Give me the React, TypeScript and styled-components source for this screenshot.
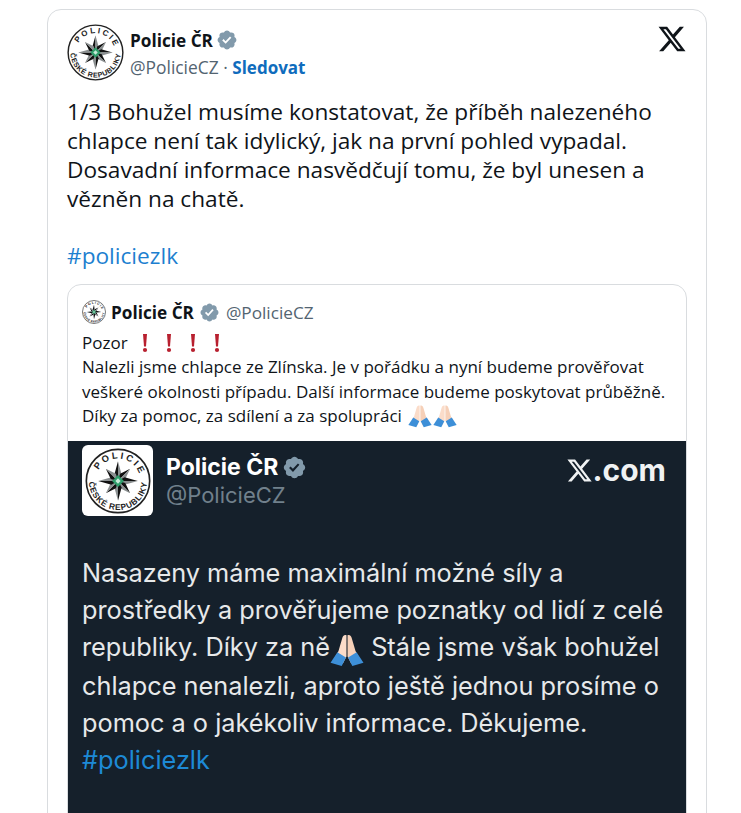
import styled, { createGlobalStyle } from 'styled-components';

const BADGE_PATH =
	'M22.25 12c0-1.43-.88-2.67-2.19-3.34.46-1.39.2-2.9-.81-3.91s-2.52-1.27-3.91-.81c-.66-1.31-1.91-2.19-3.34-2.19s-2.67.88-3.33 2.19c-1.4-.46-2.91-.2-3.92.81s-1.26 2.52-.8 3.91c-1.31.67-2.2 1.91-2.2 3.34s.89 2.67 2.2 3.34c-.46 1.39-.21 2.9.8 3.91s2.52 1.26 3.91.81c.67 1.31 1.91 2.19 3.34 2.19s2.68-.88 3.34-2.19c1.39.45 2.9.2 3.91-.81s1.27-2.52.81-3.91c1.31-.67 2.19-1.91 2.19-3.34zm-11.71 4.2L6.8 12.46l1.41-1.42 2.26 2.26 4.8-5.23 1.47 1.36-6.2 6.77z';
const X_PATH =
	'M18.244 2.25h3.308l-7.227 8.26 8.502 11.24H16.17l-5.214-6.817L4.99 21.75H1.68l7.73-8.835L1.254 2.25H8.08l4.713 6.231zm-1.161 17.52h1.833L7.084 4.126H5.117z';

const RAYS = [0, 45, 90, 135, 180, 225, 270, 315];

const Seal = ({ size, id }: { size: number; id: string }) => (
	<svg width={size} height={size} viewBox="0 0 100 100">
		<circle cx="50" cy="50" r="48" fill="#fff" stroke="#222" strokeWidth="2.5" />
		<path id={id} d="M50 50m-34 0a34 34 0 1 1 68 0a34 34 0 1 1 -68 0" fill="none" />
		<text fontFamily="'Liberation Sans', sans-serif" fontSize="14" fontWeight="700" fill="#222">
			<textPath href={`#${id}`} startOffset="8%" textLength="78" lengthAdjust="spacing">
				POLICIE
			</textPath>
		</text>
		<path id={`${id}-b`} d="M6 50a44 44 0 0 0 88 0" fill="none" />
		<text fontFamily="'Liberation Sans', sans-serif" fontSize="12.5" fontWeight="700" fill="#222">
			<textPath href={`#${id}-b`} startOffset="1%" textLength="134" lengthAdjust="spacing">
				ČESKÉ REPUBLIKY
			</textPath>
		</text>
		{RAYS.map((angle, i) => (
			<g key={angle} transform={`rotate(${angle} 50 50)`}>
				<path d={`M50 ${i % 2 ? 24 : 20}L50 50L44.5 40Z`} fill="#111" />
				<path d={`M50 ${i % 2 ? 24 : 20}L50 50L55.5 40Z`} fill="#8a8f90" />
			</g>
		))}
		<path d="M50 41L59 50L50 59L41 50Z" fill="#2f9e6b" />
		<path d="M50 46L54 50L50 54L46 50Z" fill="#c6ead8" />
	</svg>
);

const Badge = ({ size }: { size: number }) => (
	<BadgeIcon viewBox="0 0 24 24" width={size} height={size}>
		<path d={BADGE_PATH} />
	</BadgeIcon>
);

const PrayingHands = ({ size }: { size: number }) => (
	<HandsIcon viewBox="0 0 32 32" width={size} height={size}>
		<path d="M15.500 2C13 1.500 12 3 11.500 5L8 17 4 24l8 5 3.500-7z" fill="#fbdcc9" />
		<path d="M16.500 2C19 1.500 20 3 20.500 5L24 17l4 7-8 5-3.500-7z" fill="#f6d0b8" />
		<path d="M7 18L.5 28 11 31l4-8z" fill="#3d8fd8" />
		<path d="M25 18l6.500 10L21 31l-4-8z" fill="#3d8fd8" />
	</HandsIcon>
);

const Bang = () => (
	<BangIcon viewBox="0 0 8 20" width={8} height={20}>
		<path d="M2 1h4L5 13.500H3z" />
		<circle cx="4" cy="17" r="2.100" />
	</BangIcon>
);

const App = () => (
	<>
		<GlobalStyle />
		<Page>
			<Card>
				<Header>
					<SealSlot>
						<Seal size={57} id="seal-main" />
					</SealSlot>
					<Author>
						<NameRow>
							<Name>Policie ČR</Name>
							<Badge size={22} />
						</NameRow>
						<HandleRow>
							@PolicieCZ · <Follow>Sledovat</Follow>
						</HandleRow>
					</Author>
					<XLogo viewBox="0 0 24 24" width={30} height={30}>
						<path d={X_PATH} />
					</XLogo>
				</Header>

				<TweetText>
					1/3 Bohužel musíme konstatovat, že příběh nalezeného
					<br />
					chlapce není tak idylický, jak na první pohled vypadal.
					<br />
					Dosavadní informace nasvědčují tomu, že byl unesen a
					<br />
					vězněn na chatě.
				</TweetText>
				<HashTag>#policiezlk</HashTag>

				<Quote>
					<QuoteBody>
						<QuoteHeader>
							<Seal size={24} id="seal-quote" />
							<QuoteName>Policie ČR</QuoteName>
							<Badge size={21} />
							<QuoteHandle>@PolicieCZ</QuoteHandle>
						</QuoteHeader>
						<QuoteLine>
							Pozor
							<Bangs>
								<Bang />
								<Bang />
								<Bang />
								<Bang />
							</Bangs>
						</QuoteLine>
						<QuoteLine>Nalezli jsme chlapce ze Zlínska. Je v pořádku a nyní budeme prověřovat</QuoteLine>
						<QuoteLine>veškeré okolnosti případu. Další informace budeme poskytovat průběžně.</QuoteLine>
						<QuoteLine>
							Díky za pomoc, za sdílení a za spolupráci
							<HandsGroup>
								<PrayingHands size={24} />
								<PrayingHands size={24} />
							</HandsGroup>
						</QuoteLine>
					</QuoteBody>

					<Shot>
						<ShotHeader>
							<ShotLogo>
								<Seal size={66} id="seal-shot" />
							</ShotLogo>
							<ShotAuthor>
								<ShotNameRow>
									<ShotName>Policie ČR</ShotName>
									<Badge size={25} />
								</ShotNameRow>
								<ShotHandle>@PolicieCZ</ShotHandle>
							</ShotAuthor>
							<ShotBrand>
								<ShotX viewBox="0 0 24 24" width={27} height={27}>
									<path d={X_PATH} />
								</ShotX>
								.com
							</ShotBrand>
						</ShotHeader>
						<ShotText>
							Nasazeny máme maximální možné síly a
							<br />
							prostředky a prověřujeme poznatky od lidí z celé
							<br />
							republiky. Díky za ně
							<PrayingHands size={34} /> Stále jsme však bohužel
							<br />
							chlapce nenalezli, aproto ještě jednou prosíme o
							<br />
							pomoc a o jakékoliv informace. Děkujeme.
							<br />
							<ShotTag>#policiezlk</ShotTag>
						</ShotText>
					</Shot>
				</Quote>
			</Card>
		</Page>
	</>
);

export default App;

const GlobalStyle = createGlobalStyle`
	html, body {
		margin: 0;
		padding: 0;
		background: #fff;
		overflow: hidden;
	}
`;

const Page = styled.div`
	height: 813px;
	overflow: hidden;
	padding: 9px 0 0 47px;
	box-sizing: border-box;
	font-family: 'Open Sans', sans-serif;
	color: #0f1419;
`;

const Card = styled.div`
	width: 660px;
	height: 900px;
	box-sizing: border-box;
	border: 1px solid #d9dcdf;
	border-radius: 14px;
	padding: 14px 19px 0;
`;

const Header = styled.div`
	display: flex;
	align-items: flex-start;
	height: 60px;
`;

const SealSlot = styled.div`
	width: 63px;
	flex-shrink: 0;
	line-height: 0;
`;

const Author = styled.div`
	flex: 1;
	display: flex;
	flex-direction: column;
	gap: 3px;
	padding-top: 4px;
`;

const NameRow = styled.div`
	display: flex;
	align-items: center;
	gap: 3px;
	height: 24px;
`;

const Name = styled.span`
	font-size: 17.2px;
	font-weight: 700;
`;

const BadgeIcon = styled.svg`
	fill: #829aab;
	flex-shrink: 0;
`;

const HandleRow = styled.div`
	font-size: 17.4px;
	line-height: 24px;
	color: #536471;
	white-space: nowrap;
`;

const Follow = styled.span`
	color: #0f6cbd;
	font-weight: 700;
	font-size: 17px;
`;

const XLogo = styled.svg`
	fill: #0f1419;
	margin: 0 0 0 auto;
`;

const TweetText = styled.div`
	margin-top: 13px;
	font-size: 22.65px;
	line-height: 29px;
	white-space: nowrap;
`;

const HashTag = styled.div`
	margin-top: 28px;
	font-size: 22.65px;
	line-height: 29px;
	color: #1d7fd0;
`;

const Quote = styled.div`
	margin-top: 14px;
	border: 1px solid #d9dcdf;
	border-radius: 14px 14px 0 0;
	overflow: hidden;
`;

const QuoteBody = styled.div`
	padding: 15px 14px 12.4px;
`;

const QuoteHeader = styled.div`
	display: flex;
	align-items: center;
	gap: 5px;
	height: 24px;
	margin-bottom: 7px;
`;

const QuoteName = styled.span`
	font-size: 17.2px;
	font-weight: 700;
`;

const QuoteHandle = styled.span`
	font-size: 17.2px;
	color: #536471;
	margin-left: 1px;
`;

const QuoteLine = styled.div`
	display: flex;
	align-items: center;
	font-size: 17px;
	line-height: 24.4px;
	white-space: nowrap;
`;

const Bangs = styled.span`
	display: inline-flex;
	gap: 16px;
	margin-left: 13px;
`;

const BangIcon = styled.svg`
	fill: #b8202f;
`;

const HandsGroup = styled.span`
	display: inline-flex;
	gap: 1px;
	margin-left: 6px;
`;

const HandsIcon = styled.svg`
	flex-shrink: 0;
	vertical-align: middle;
`;

const Shot = styled.div`
	background: #15202b;
	height: 400px;
	padding: 4px 14px 0;
	color: #e7e9ea;
	font-family: Inter, 'Liberation Sans', sans-serif;
`;

const ShotHeader = styled.div`
	display: flex;
	align-items: flex-start;
`;

const ShotLogo = styled.div`
	width: 71px;
	height: 71px;
	background: #fff;
	border-radius: 6px;
	display: flex;
	align-items: center;
	justify-content: center;
	flex-shrink: 0;
`;

const ShotAuthor = styled.div`
	margin: 5px 0 0 13px;
	flex: 1;
`;

const ShotNameRow = styled.div`
	display: flex;
	align-items: center;
	gap: 4px;
	height: 34px;
`;

const ShotName = styled.span`
	font-size: 23px;
	font-weight: 700;
	color: #fff;
`;

const ShotHandle = styled.div`
	font-size: 22px;
	line-height: 22px;
	color: #71808c;
`;

const ShotBrand = styled.div`
	display: flex;
	align-items: center;
	font-size: 30px;
	font-weight: 700;
	color: #f0f2f3;
	margin: 7px 6px 0 0;
	height: 36px;
`;

const ShotX = styled.svg`
	fill: #f0f2f3;
`;

const ShotText = styled.div`
	margin-top: 38px;
	font-size: 25.3px;
	line-height: 37.2px;
	white-space: nowrap;
`;

const ShotTag = styled.span`
	color: #1d8ad6;
`;
